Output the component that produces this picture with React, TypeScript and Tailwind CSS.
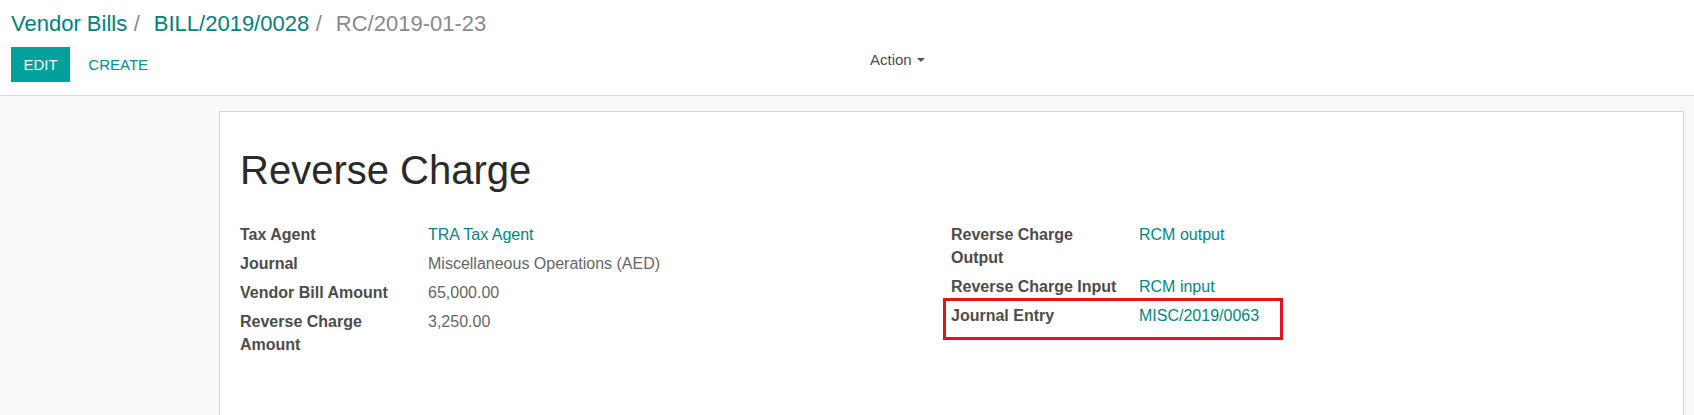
import React from 'react'

const leftRows = [
    { label: 'Tax Agent', value: 'TRA Tax Agent', link: true },
    { label: 'Journal', value: 'Miscellaneous Operations (AED)', link: false },
    { label: 'Vendor Bill Amount', value: '65,000.00', link: false },
    { label: 'Reverse Charge Amount', value: '3,250.00', link: false },
]

const rightRows = [
    { label: 'Reverse Charge Output', value: 'RCM output', link: true, marked: false },
    { label: 'Reverse Charge Input', value: 'RCM input', link: true, marked: false },
    { label: 'Journal Entry', value: 'MISC/2019/0063', link: true, marked: true },
]

type Row = { label: string; value: string; link: boolean; marked?: boolean }

const FieldGroup = ({ rows }: { rows: Row[] }) => (
    <div className="flex flex-col">
        {rows.map((row) => (
            <div key={row.label} className="relative flex pb-[6.25px]">
                {row.marked && (
                    // red highlight drawn over the row
                    <div className="absolute left-[-8px] top-[-7px] w-[340px] h-[42px] border-[3px] border-[#e3121c]" />
                )}
                <div className="w-[188px] shrink-0 pr-[16px] font-bold text-[#4c4c4c]">{row.label}</div>
                <div className={row.link ? 'text-[#008784]' : 'text-[#666666]'}>{row.value}</div>
            </div>
        ))}
    </div>
)

const App = () => {
    return (
        <div className="min-h-[415px] bg-[#f9f9f9] font-['Liberation_Sans',Arial,sans-serif]">
            {/* Control panel */}
            <div className="bg-white border-b border-[#d6d6d6] pt-[12px] pb-[13px]">
                <div className="flex items-baseline pl-[11px] text-[22px] leading-[24px]">
                    <span className="text-[#00827f]">Vendor Bills</span>
                    <span className="ml-[6.5px] text-[#888888]">/</span>
                    <span className="ml-[14px] text-[#00827f]">BILL/2019/0028</span>
                    <span className="ml-[6.5px] text-[#888888]">/</span>
                    <span className="ml-[14px] text-[#8a8a8a]">RC/2019-01-23</span>
                </div>
                <div className="flex items-start mt-[11px] pl-[11px] text-[15px]">
                    <div className="flex w-[847px]">
                        <button className="bg-[#00a09d] text-white px-[12.4px] py-[6px] leading-[23px]">EDIT</button>
                        <button className="ml-[6px] text-[#008f8c] px-[12.4px] py-[6px] leading-[23px]">CREATE</button>
                    </div>
                    <button className="flex items-center gap-[5px] px-[12px] pt-[1px] leading-[23px] text-[#4c4c4c]">
                        Action
                        <svg width="8" height="4" viewBox="0 0 8 4" className="mt-[1px]">
                            <path d="M0 0 L8 0 L4 4 Z" fill="#555555" />
                        </svg>
                    </button>
                </div>
            </div>

            {/* Sheet */}
            <div className="pt-[15px] ml-[219px] mr-[10px]">
                <div className="bg-white border border-[#d4d4d4] min-h-[320px] pl-[20px] pr-[21px] pt-[35px] pb-[40px]">
                    <h1 className="text-[40px] leading-[47px] text-[#2a2a2a]">Reverse Charge</h1>
                    <div className="grid grid-cols-2 mt-[30px] text-[16px] leading-[22.75px]">
                        <FieldGroup rows={leftRows} />
                        <FieldGroup rows={rightRows} />
                    </div>
                </div>
            </div>
        </div>
    )
}

export default App
